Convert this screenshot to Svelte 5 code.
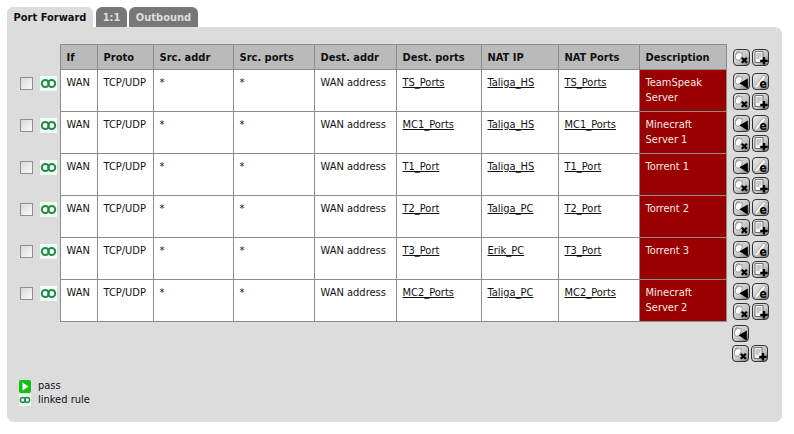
<script>
  const rules = [
    { dst: 'TS_Ports', ip: 'Taliga_HS', nat: 'TS_Ports', desc: ['TeamSpeak', 'Server'] },
    { dst: 'MC1_Ports', ip: 'Taliga_HS', nat: 'MC1_Ports', desc: ['Minecraft', 'Server 1'] },
    { dst: 'T1_Port', ip: 'Taliga_HS', nat: 'T1_Port', desc: ['Torrent 1'] },
    { dst: 'T2_Port', ip: 'Taliga_PC', nat: 'T2_Port', desc: ['Torrent 2'] },
    { dst: 'T3_Port', ip: 'Erik_PC', nat: 'T3_Port', desc: ['Torrent 3'] },
    { dst: 'MC2_Ports', ip: 'Taliga_PC', nat: 'MC2_Ports', desc: ['Minecraft', 'Server 2'] }
  ];
  const heads = ['If', 'Proto', 'Src. addr', 'Src. ports', 'Dest. addr', 'Dest. ports', 'NAT IP', 'NAT Ports', 'Description'];
</script>

{#snippet btn(kind)}
  <svg class="btn" viewBox="0 0 17 17" width="17" height="17">
    <defs>
      <linearGradient id="g-{kind}" x1="0" y1="0" x2="1" y2="1">
        <stop offset="0" stop-color="#ececec" />
        <stop offset="0.6" stop-color="#c4c4c4" />
        <stop offset="1" stop-color="#707070" />
      </linearGradient>
    </defs>
    <rect x="0.5" y="0.5" width="16" height="16" rx="3.5" fill="url(#g-{kind})" stroke="#333" />
    {#if kind === 'x' || kind === 'left'}
      <path d="M2.500 9.500V5l1 .5V3l1.200 1.500V2.300L6.200 4V2.500l1.300 1.700L9 3v3.500l-2 4.500H4z" fill="#fff" stroke="#777" stroke-width=".6" />
    {/if}
    {#if kind === 'x'}
      <path d="M8.800 8.800l5 5M13.800 8.800l-5 5" stroke="#000" stroke-width="2.300" />
    {:else if kind === 'left'}
      <path d="M14.800 5.500v9.500h-1L6.500 10.200z" fill="#000" />
    {:else if kind === 'edit'}
      <path d="M2 14.500L11.500 2.500l2.500 1.500L5 15z" fill="#fff" stroke="#777" stroke-width=".5" />
      <text x="7.600" y="15" class="e">e</text>
    {:else}
      <path d="M3 2.500h8v11H3z" fill="#f4f4f4" stroke="#555" stroke-width=".8" />
      <path d="M4.500 5h5M4.500 7h5M4.500 9h3" stroke="#999" />
      <path d="M12 8v7.500M8.200 11.800h7.500" stroke="#000" stroke-width="2.300" />
    {/if}
  </svg>
{/snippet}

{#snippet link()}
  <svg class="link" viewBox="0 0 17 15" width="17" height="15">
    <rect width="17" height="15" fill="#f1fbf1" />
    <circle cx="5.300" cy="7.500" r="3.500" fill="none" stroke="#1f8a4a" stroke-width="2" />
    <circle cx="11.700" cy="7.500" r="3.500" fill="none" stroke="#1f8a4a" stroke-width="2" />
  </svg>
{/snippet}

<div class="page">
  <nav class="tabs">
    <span class="tab active t1">Port Forward</span>
    <span class="tab t2">1:1</span>
    <span class="tab t3">Outbound</span>
  </nav>
  <section class="panel">
    <table>
      <colgroup>
        <col class="c-chk" /><col class="c-lnk" />
        <col class="c-if" /><col class="c-proto" /><col class="c-src" /><col class="c-sport" />
        <col class="c-dst" /><col class="c-dport" /><col class="c-nat" /><col class="c-nport" />
        <col class="c-desc" /><col class="c-acts" />
      </colgroup>
      <thead>
        <tr>
          <th class="blank"></th>
          <th class="blank"></th>
          {#each heads as h}
            <th>{h}</th>
          {/each}
          <th class="blank acts">
            <div class="btns head">{@render btn('x')}{@render btn('plus')}</div>
          </th>
        </tr>
      </thead>
      <tbody>
        {#each rules as r}
          <tr>
            <td class="blank chk"><span class="box"></span></td>
            <td class="blank lnk">{@render link()}</td>
            <td>WAN</td>
            <td>TCP/UDP</td>
            <td>*</td>
            <td>*</td>
            <td>WAN address</td>
            <td><u>{r.dst}</u></td>
            <td><u>{r.ip}</u></td>
            <td><u>{r.nat}</u></td>
            <td class="desc">{#each r.desc as line}<div>{line}</div>{/each}</td>
            <td class="blank acts">
              <div class="btns">{@render btn('left')}{@render btn('edit')}{@render btn('x')}{@render btn('plus')}</div>
            </td>
          </tr>
        {/each}
        <tr>
          <td class="blank" colspan="11"></td>
          <td class="blank acts">
            <div class="btns">{@render btn('left')}<span class="gap"></span>{@render btn('x')}{@render btn('plus')}</div>
          </td>
        </tr>
      </tbody>
    </table>
    <div class="legend">
      <div class="item">
        <svg viewBox="0 0 12 13" width="12" height="13">
          <rect width="12" height="13" rx="2" fill="#12c012" />
          <path d="M3.500 2.500l6 4-6 4z" fill="#fff" />
        </svg>
        pass
      </div>
      <div class="item">
        <svg viewBox="0 0 12 12" width="12" height="12">
          <rect width="12" height="12" fill="#effaef" />
          <circle cx="3.800" cy="6" r="2.400" fill="none" stroke="#1f8a4a" stroke-width="1.500" />
          <circle cx="8.200" cy="6" r="2.400" fill="none" stroke="#1f8a4a" stroke-width="1.500" />
        </svg>
        linked rule
      </div>
    </div>
  </section>
</div>

<style>
  :global(body) {
    margin: 0;
    background: #fff;
  }
  .page {
    width: 794px;
    height: 434px;
    padding: 7px 0 0 7px;
    box-sizing: border-box;
    font-family: "DejaVu Sans Condensed", "DejaVu Sans", sans-serif;
    font-stretch: condensed;
    font-size: 11px;
    color: #111;
  }
  .tabs {
    display: flex;
    height: 20px;
    font-weight: 700;
  }
  .tab {
    box-sizing: border-box;
    padding-top: 4px;
    text-align: center;
    background: #777;
    color: #ddd;
    border-radius: 6px 6px 0 0;
  }
  .t1 { width: 86px; margin-right: 3px; }
  .t2 { width: 31px; margin-right: 2px; }
  .t3 { width: 69px; }
  .tab.active {
    background: #dcdcdc;
    color: #111;
  }
  .panel {
    width: 775px;
    height: 395px;
    box-sizing: border-box;
    background: #dcdcdc;
    border-radius: 0 7px 7px 7px;
    padding: 17px 0 0 7px;
    position: relative;
  }
  table {
    border-collapse: collapse;
    table-layout: fixed;
    width: 758px;
  }
  .c-chk { width: 23px; }
  .c-lnk { width: 23px; }
  .c-if { width: 37px; }
  .c-proto { width: 56px; }
  .c-src { width: 80px; }
  .c-sport { width: 81px; }
  .c-dst { width: 82px; }
  .c-dport { width: 85px; }
  .c-nat { width: 77px; }
  .c-nport { width: 81px; }
  .c-desc { width: 87px; }
  .c-acts { width: 46px; }
  th, td {
    border: 1px solid #8c8c8c;
    text-align: left;
    vertical-align: top;
    padding: 5px 0 0 6px;
    background: #fff;
    overflow: hidden;
    white-space: nowrap;
    box-sizing: border-box;
  }
  th {
    background: #bababa;
    height: 25px;
    padding-top: 6px;
    font-weight: 700;
  }
  td {
    height: 42px;
    line-height: 15px;
  }
  .blank {
    border: none;
    background: transparent;
    padding: 0;
  }
  .chk { padding: 7px 0 0 6px; }
  .lnk { padding: 6px 0 0 3px; }
  .box {
    display: block;
    width: 11px;
    height: 11px;
    border: 1px solid #8f8f8f;
    background: linear-gradient(135deg, #d8d8d8, #fafafa);
  }
  .link { display: block; }
  .desc {
    background: #990000;
    color: #fbe9e9;
  }
  .acts {
    padding: 0 0 0 6px;
    vertical-align: top;
  }
  .btns {
    display: flex;
    flex-wrap: wrap;
    gap: 3px 2px;
    padding-top: 3px;
    width: 38px;
  }
  .btns.head { padding-top: 4px; }
  .gap { width: 19px; }
  .btn { display: block; }
  .e {
    font-family: "DejaVu Sans", sans-serif;
    font-size: 12px;
    font-weight: 700;
    fill: #000;
  }
  .legend {
    position: absolute;
    left: 12px;
    top: 352px;
    line-height: 14px;
  }
  .item {
    display: flex;
    align-items: center;
    gap: 7px;
  }
</style>
